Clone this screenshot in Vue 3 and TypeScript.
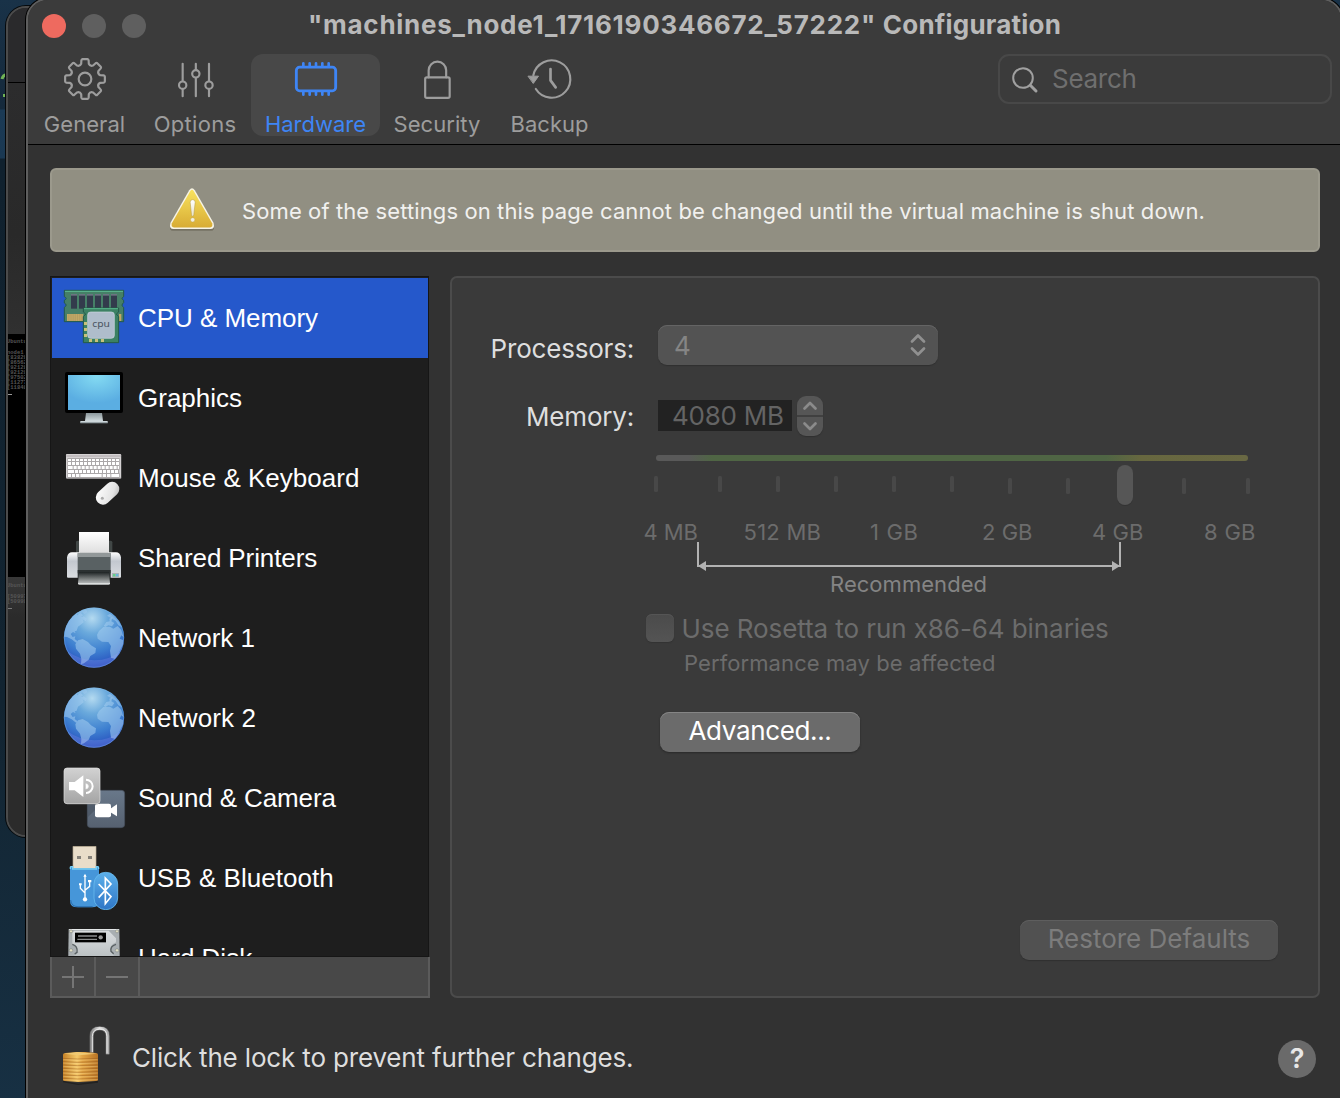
<script setup lang="ts">
import { ref } from 'vue'

interface Tab { id: string; label: string; width: number; view: string; spacing: number }
interface Device { id: string; label: string; view: string; spacing: number }

const tabs: Tab[] = [
  { id: 'general', label: 'General', width: 109, view: '183 165 144 144', spacing: 0.05 },
  { id: 'options', label: 'Options', width: 112, view: '513 165 144 144', spacing: 0.3 },
  { id: 'hardware', label: 'Hardware', width: 129, view: '876 165 144 144', spacing: 0 },
  { id: 'security', label: 'Security', width: 114, view: '99 165 144 144', spacing: 0.05 },
  { id: 'backup', label: 'Backup', width: 111, view: '438 165 144 144', spacing: 0 },
]

const devices: Device[] = [
  { id: 'cpu', label: 'CPU & Memory', view: '186 408 192 192', spacing: -0.05 },
  { id: 'graphics', label: 'Graphics', view: '36 18 192 192', spacing: 0 },
  { id: 'mouse', label: 'Mouse & Keyboard', view: '36 258 192 192', spacing: 0.02 },
  { id: 'printer', label: 'Shared Printers', view: '36 18 192 192', spacing: -0.1 },
  { id: 'net', label: 'Network 1', view: '36 258 192 192', spacing: 0 },
  { id: 'net', label: 'Network 2', view: '36 258 192 192', spacing: 0.1 },
  { id: 'sound', label: 'Sound & Camera', view: '36 48 192 192', spacing: -0.12 },
  { id: 'usb', label: 'USB & Bluetooth', view: '36 288 192 192', spacing: 0.05 },
  { id: 'disk', label: 'Hard Disk', view: '66 48 192 192', spacing: 0 },
]

const activeTab = ref('hardware')
const selected = ref(0)

const consoleTop = ['Ubuntu', '', 'node1', '[83829', '[86562', '[92128', '[92129', '[97502', '[11277', '[11848']
const consoleBottom = ['Ubuntu', '', '[50997', '[50998']

const ticks = [
  { x: 1, y: 22 }, { x: 65, y: 22 }, { x: 123, y: 22 }, { x: 181, y: 22 }, { x: 239, y: 22 },
  { x: 297, y: 22 }, { x: 355, y: 24 }, { x: 413, y: 24 }, { x: 529, y: 24 }, { x: 593, y: 24 },
]
const marks = [
  { x: 16, w: 54.5, text: '4 MB' }, { x: 116, w: 77.5, text: '512 MB' }, { x: 242.500, w: 48, text: '1 GB' },
  { x: 354.500, w: 50.5, text: '2 GB' }, { x: 464.500, w: 51.5, text: '4 GB' }, { x: 576.500, w: 51.5, text: '8 GB' },
]

function gearPath(cx: number, cy: number): string {
  const at = (deg: number, r: number) => {
    const a = (deg * Math.PI) / 180
    return `${(cx + r * Math.sin(a)).toFixed(1)} ${(cy - r * Math.cos(a)).toFixed(1)}`
  }
  let d = ''
  for (let i = 0; i < 8; i++) {
    const a = i * 45
    d += `${i ? 'L' : 'M'}${at(a - 14, 47)}L${at(a - 11, 57)}Q${at(a - 10, 60)} ${at(a - 7, 60)}`
    d += `L${at(a + 7, 60)}Q${at(a + 10, 60)} ${at(a + 11, 57)}L${at(a + 14, 47)}Q${at(a + 22.5, 40)} ${at(a + 31, 47)}`
  }
  return d + 'Z'
}
const gear = gearPath(255, 237)

const keys: { x: number; y: number; w: number }[] = []
for (let r = 0; r < 5; r++) {
  const y = [297, 306, 318, 330, 342][r]
  if (r === 4) {
    keys.push({ x: 54, y, w: 9 }, { x: 66, y, w: 9 }, { x: 78, y, w: 10 }, { x: 91, y, w: 64 },
      { x: 158, y, w: 10 }, { x: 171, y, w: 10 }, { x: 184, y, w: 23 })
  } else {
    const shift = [0, 0, 5, 9][r]
    keys.push({ x: 54, y, w: 9 + shift })
    for (let c = 1; c < 12; c++) keys.push({ x: 54 + c * 12 + shift, y, w: 9 })
    keys.push({ x: 198 + shift, y, w: 9 - shift + (shift > 8 ? 1 : 0) })
  }
}
</script>

<template>
  <div class="desktop">
    <svg class="shard" width="6" height="110" viewBox="0 0 6 110">
      <path d="M2 79Q3 75 6 75M3 95.500H6" fill="none" stroke="#70b356" stroke-width="3" />
    </svg>
    <div class="rear">
      <div class="rear-title"></div>
      <div class="rear-body"></div>
      <div class="console live">
        <div v-for="(l, i) in consoleTop" :key="i" :class="['cline', { gap: !l }]">{{ l }}</div>
        <i></i>
      </div>
      <div class="console old">
        <div v-for="(l, i) in consoleBottom" :key="i" :class="['cline', { gap: !l }]">{{ l }}</div>
        <i></i>
      </div>
    </div>

    <div class="window">
      <header class="toolbar">
        <div class="titlebar">
          <span class="light close"></span><span class="light"></span><span class="light"></span>
          <h1>"machines_node1_1716190346672_57222" <span>Configuration</span></h1>
        </div>
        <div class="tools">
          <nav class="tabs">
            <button v-for="t in tabs" :key="t.id" type="button" :class="['tab', { active: t.id === activeTab }]"
              :style="{ width: t.width + 'px' }" @click="activeTab = t.id">
              <svg width="48" height="48" :viewBox="t.view" fill="none" stroke="currentColor" stroke-width="6.500"
                stroke-linecap="round" stroke-linejoin="round">
                <template v-if="t.id === 'general'">
                  <path :d="gear" /><circle cx="255" cy="237" r="19" />
                </template>
                <template v-else-if="t.id === 'options'">
                  <path d="M548 191.500V243M548 268V288.500M587.500 191.500V209M587.500 234V288.500M627 191.500V243M627 268V288.500" />
                  <circle cx="548" cy="255.500" r="11" /><circle cx="587.500" cy="221.500" r="11" /><circle cx="627" cy="255.500" r="11" />
                </template>
                <template v-else-if="t.id === 'hardware'">
                  <rect x="889" y="201.500" width="118" height="71" rx="10" stroke-width="8.500" />
                  <path stroke-width="8" d="M910 190V198M929 190V198M948 190V198M967 190V198M986 190V198M910 276V284M929 276V284M948 276V284M967 276V284M986 276V284" />
                </template>
                <template v-else-if="t.id === 'security'">
                  <rect x="135.500" y="232" width="73.500" height="61.500" rx="5" />
                  <path d="M146 232V211A26 26 0 0 1 198.500 211V232" />
                </template>
                <template v-else>
                  <path d="M460 226A56 56 0 1 1 467.500 267" />
                  <path d="M445 228.500H475.500L460.500 249.500Z" fill="currentColor" stroke-width="3" />
                  <path d="M511.500 207V241L527 262" stroke-width="8" />
                </template>
              </svg>
              <span :style="{ letterSpacing: t.spacing + 'px' }">{{ t.label }}</span>
            </button>
          </nav>
          <div class="search">
            <svg width="28" height="28" viewBox="0 0 28 28" fill="none" stroke="#a0a0a0" stroke-linecap="round">
              <circle cx="12" cy="12" r="9.800" stroke-width="2" /><path d="M19.300 19.300L25 25" stroke-width="3" />
            </svg>
            <span>Search</span>
          </div>
        </div>
      </header>

      <section class="banner">
        <svg width="52" height="52" viewBox="498 102 156 156">
          <defs>
            <linearGradient id="warn" x1="0" y1="0" x2="0" y2="1"><stop offset="0" stop-color="#f8e25e" /><stop offset="1" stop-color="#d8ac34" /></linearGradient>
            <linearGradient id="bang" x1="0" y1="0" x2="0" y2="1"><stop offset="0" stop-color="#fff" /><stop offset="1" stop-color="#e9e3c8" /></linearGradient>
          </defs>
          <path d="M568 124Q576 114 584 124L641 221Q646 239 633 239H519Q506 239 511 221Z" fill="#55503d" opacity=".45" transform="translate(0 3)" />
          <path d="M567.500 121Q576 108 584.500 121L640.500 218Q646 237 631 237H521Q506 237 511.500 218Z" fill="#f7f4e6" />
          <path d="M571 123Q576 115 581 123L636.500 220Q639.500 232 630 232.500H522Q512.500 232 515.500 220Z" fill="url(#warn)" />
          <path d="M570.500 157Q570.500 149 578 149T585.500 157L581.500 194Q581 199 578 199T574.500 194Z" fill="url(#bang)" stroke="#b39a45" stroke-width="1.500" />
          <circle cx="578" cy="209.500" r="6.500" fill="#f2efdf" stroke="#b39a45" stroke-width="1" />
        </svg>
        <span>Some of the settings on this page cannot be changed until the virtual machine is shut down.</span>
      </section>

      <main class="columns">
        <aside class="sidebar">
          <ul class="devices">
            <li v-for="(d, i) in devices" :key="i" :class="{ selected: i === selected }" @click="selected = i">
              <svg width="64" height="64" :viewBox="d.view">
                <template v-if="d.id === 'cpu'">
                  <path d="M193 421H371V440Q361 445 371 451V458Q361 466 371 472V515H193V472Q204 465 193 459V451Q204 445 193 440Z" fill="#467f67" stroke="#24594a" stroke-width="3" />
                  <path d="M195 424H369" stroke="#5cba92" stroke-width="3" />
                  <path v-for="n in 6" :key="n" :d="`M${189 + n * 24} 434h18v42h-18z`" fill="#333b4c" />
                  <path v-for="n in 6" :key="'t' + n" :d="`M${189 + n * 24} 432h18v5h-18z`" fill="#6c7482" />
                  <path d="M201 492H250V513H201ZM357 492H364V513H357Z" fill="#c1a866" />
                  <path v-for="n in 7" :key="'g' + n" :d="`M${200 + n * 6.500} 492v21`" stroke="#9a8a58" />
                  <path d="M250 474H356V486L349 492L356 500V578H250V500L257 492L250 486Z" fill="#3c8163" stroke="#245a47" stroke-width="3" />
                  <path d="M252 476H354" stroke="#58b78c" stroke-width="3" />
                  <path d="M252 516h9v9h-9zM252 534h9v9h-9zM252 552h9v9h-9zM267 567h9v9h-9zM285 567h9v9h-9zM303 567h9v9h-9z" fill="#c8c17c" />
                  <rect x="263" y="486" width="80" height="79" rx="9" fill="#afbdcb" stroke="#d0dae2" stroke-width="2" />
                  <text x="303.500" y="532" text-anchor="middle" textLength="53" lengthAdjust="spacingAndGlyphs" font-size="27" fill="#4b5561" class="chip">cpu</text>
                </template>
                <template v-else-if="d.id === 'graphics'">
                  <defs>
                    <radialGradient id="scr" cx=".55" cy=".05" r=".75"><stop offset="0" stop-color="#83daf2" /><stop offset="1" stop-color="#5baee2" /></radialGradient>
                    <linearGradient id="stand" x1="0" y1="0" x2="0" y2="1"><stop offset="0" stop-color="#8b979b" /><stop offset="1" stop-color="#d3dde0" /></linearGradient>
                  </defs>
                  <rect x="45" y="36" width="174" height="123" rx="6" fill="#000" />
                  <rect x="54" y="45" width="156" height="105" fill="url(#scr)" />
                  <path d="M108 159H156L159 184H105Z" fill="url(#stand)" />
                  <path d="M91 183H173V189H91Z" fill="#ccd6d9" /><path d="M91 187H173V190H91Z" fill="#7f8a8e" />
                </template>
                <template v-else-if="d.id === 'mouse'">
                  <defs>
                    <linearGradient id="mse" x1="0" y1="0" x2="1" y2="1"><stop offset="0" stop-color="#fff" /><stop offset=".7" stop-color="#e3e3e3" /><stop offset="1" stop-color="#b5b5b5" /></linearGradient>
                  </defs>
                  <rect x="48" y="282" width="166" height="75" rx="4" fill="#8e8c8d" />
                  <rect x="48" y="282" width="165" height="72" rx="3" fill="#d5d2d3" />
                  <path d="M52 294H209V354H52Z" fill="#aaa7a8" /><path d="M49 288H212" stroke="#bbb6b8" stroke-width="5" />
                  <rect v-for="(k, n) in keys" :key="n" :x="k.x" :y="k.y" :width="k.w" :height="n < 13 ? 6 : 9" fill="#fff" />
                  <rect x="133" y="378" width="80" height="43" rx="21" transform="rotate(-43 173 400)" fill="url(#mse)" />
                  <circle cx="157" cy="415" r="4.500" fill="#aaa" />
                </template>
                <template v-else-if="d.id === 'printer'">
                  <defs>
                    <linearGradient id="paper" x1="0" y1="0" x2="0" y2="1"><stop offset="0" stop-color="#fff" /><stop offset="1" stop-color="#dedede" /></linearGradient>
                    <linearGradient id="side" x1="0" y1="0" x2="0" y2="1"><stop offset="0" stop-color="#fff" /><stop offset=".35" stop-color="#c3c8cf" /><stop offset="1" stop-color="#dadde1" /></linearGradient>
                    <linearGradient id="tray" x1="0" y1="0" x2="0" y2="1"><stop offset="0" stop-color="#1d2223" /><stop offset="1" stop-color="#c9cccc" /></linearGradient>
                  </defs>
                  <path d="M78 66Q78 62 84 62H182Q187 62 187 67V100H78Z" fill="#414746" />
                  <path d="M87 36H177V100H87Z" fill="url(#paper)" />
                  <path d="M51 112Q54 97 66 97H90V173H54Q51 173 51 170ZM213 112Q210 97 198 97H174V173H210Q213 173 213 170Z" fill="url(#side)" />
                  <path d="M83 100H182V160H83Z" fill="#596163" /><path d="M83 98H182V111H83Z" fill="#929899" />
                  <path d="M83 150H182V174H83Z" fill="#2b3031" />
                  <path d="M87 156H177L180 190Q180 194 176 194H88Q84 194 84 190Z" fill="url(#tray)" />
                  <path d="M84 191H180" stroke="#e2e4e4" stroke-width="3" />
                  <path d="M186 159H207V171H186Z" fill="#aab2b8" /><path d="M189 162h7v7h-7z" fill="#62d287" /><path d="M198 162h7v7h-7z" fill="#67b7dc" />
                </template>
                <template v-else-if="d.id === 'net'">
                  <defs>
                    <radialGradient id="sea" cx=".47" cy=".18" r=".85"><stop offset="0" stop-color="#b4daf0" /><stop offset=".3" stop-color="#6aa9dc" /><stop offset=".65" stop-color="#3d7fd0" /><stop offset="1" stop-color="#2347bb" /></radialGradient>
                    <clipPath id="ball"><circle cx="132" cy="353" r="90" /></clipPath>
                  </defs>
                  <circle cx="132" cy="353" r="90.500" fill="url(#sea)" />
                  <g clip-path="url(#ball)" fill="#a6cdf0" fill-opacity=".55">
                    <path d="M42 350L46 320L58 296L76 278L83 286L93 279L99 286L92 292L102 289L111 296L107 304L98 298L101 307L92 314L84 320L80 332L74 334L77 340L69 336L62 342L68 351L76 349L74 357L82 363L79 369L65 358L51 351Z" />
                    <path d="M78 280L92 270L108 267L112 276L104 283L96 277L87 286Z" fill-opacity=".4" />
                    <path d="M84 361L98 357L114 366L123 376L138 385L136 399L121 408L116 419L102 430L93 433L94 417L90 401L78 386L76 373Z" />
                    <path d="M161 318L169 306L179 304L178 296L188 290L184 304L193 309L186 319L175 316L166 321Z" />
                    <path d="M147 333L160 321L180 320L190 326L203 318L214 330L221 352L214 346L209 356L219 360V372L207 398L195 417L183 413L180 392L183 378L175 366L156 365L143 356L141 344Z" />
                    <path d="M171 287L180 281L190 288L206 305L216 322L205 316L197 303Z" fill-opacity=".5" />
                    <path d="M52 394Q88 420 132 421T212 394Q188 446 132 446T52 394Z" fill="#b0a6ff" fill-opacity=".2" />
                  </g>
                  <circle cx="132" cy="353" r="89" fill="none" stroke="#80b9ea" stroke-opacity=".35" stroke-width="3" />
                </template>
                <template v-else-if="d.id === 'sound'">
                  <defs>
                    <linearGradient id="cam" x1="0" y1="0" x2="0" y2="1"><stop offset="0" stop-color="#69788a" /><stop offset="1" stop-color="#566170" /></linearGradient>
                    <linearGradient id="spk" x1="0" y1="0" x2="0" y2="1"><stop offset="0" stop-color="#d2d2d2" /><stop offset="1" stop-color="#a4a4a4" /></linearGradient>
                  </defs>
                  <rect x="112" y="121" width="112" height="112" rx="10" fill="url(#cam)" stroke="#454f5c" stroke-width="2" />
                  <path d="M113 202L154 162H112Z" fill="#46505e" opacity=".6" />
                  <rect x="135" y="161" width="48" height="41" rx="6" fill="#fff" /><path d="M181 176L201 163V199L181 187Z" fill="#fff" />
                  <rect x="42" y="55" width="108" height="108" rx="9" fill="#555" />
                  <rect x="42" y="54" width="108" height="107" rx="9" fill="url(#spk)" stroke="#e2e2e2" stroke-width="2" />
                  <path d="M57 96H74L100 76V141L74 121H57Z" fill="#fff" />
                  <path d="M108 89A20 20 0 0 1 108 129" fill="none" stroke="#fff" stroke-width="6" />
                  <path d="M107 101A8 8 0 0 1 107 117" fill="#fff" stroke="#eee" stroke-width="2" />
                </template>
                <template v-else-if="d.id === 'usb'">
                  <defs>
                    <linearGradient id="bt" x1="0" y1="0" x2="0" y2="1"><stop offset="0" stop-color="#5cb0ea" /><stop offset="1" stop-color="#2f76c6" /></linearGradient>
                  </defs>
                  <path d="M69 289H138V358H69Z" fill="#e9ddc9" stroke="#b9aa91" stroke-width="2" />
                  <path d="M81 318h12v9h-12zM114 318h12v9h-12z" fill="#85817a" />
                  <path d="M60 352Q60 349 64 349H69V355H138V349H143Q147 349 147 352V455Q147 472 126 472H82Q60 472 60 452Z" fill="#4696d9" />
                  <path d="M61 357V352Q61 350 64 350H68V357H139V350H143Q146 350 146 357" fill="none" stroke="#75cef4" stroke-width="4" />
                  <path d="M62 450Q64 470 84 470H128" fill="none" stroke="#2b70b1" stroke-width="3" />
                  <g fill="none" stroke="#fff" stroke-width="4"><path d="M105 376V447M91 402V415L105 429M119 394V409L105 421" /></g>
                  <circle cx="105" cy="448" r="6.500" fill="#fff" /><path d="M100 380L105 371L110 380ZM114 390h10v7h-10zM87 400h8v6h-8z" fill="#fff" />
                  <rect x="132" y="367" width="71" height="112" rx="35" fill="url(#bt)" stroke="#66b9ed" stroke-width="2.500" />
                  <path d="M146 402L183 440L166 461V384L183 402L146 443" fill="none" stroke="#fff" stroke-width="5" />
                </template>
                <template v-else>
                  <defs><linearGradient id="hd" x1="0" y1="0" x2="0" y2="1"><stop offset="0" stop-color="#dadddf" /><stop offset="1" stop-color="#a3abad" /></linearGradient></defs>
                  <path d="M86 57H238L240 200H84Z" fill="#a9afb2" /><path d="M88 57H236V60H88Z" fill="#e5e8e9" />
                  <path d="M103 62H206L228 85V97Q208 106 211 121L222 138V200H101V138L115 128Q113 106 97 101V68Z" fill="url(#hd)" />
                  <path d="M97 103Q114 108 111 127L104 132M228 103Q210 108 213 124L221 131" stroke="#596063" stroke-width="4" fill="none" />
                  <path d="M105 68H198V97H105Z" fill="#020202" />
                  <path d="M114 78H171M112 88H171" stroke="#8a8c8d" stroke-width="4" /><circle cx="182" cy="82" r="6.500" fill="#999" />
                  <g fill="#e1dfc5" stroke="#777c7c" stroke-width="1.500"><circle cx="93" cy="64" r="4.500" /><circle cx="231" cy="64" r="4.500" /><circle cx="93" cy="121" r="5" /><circle cx="231" cy="121" r="5" /></g>
                </template>
              </svg>
              <span :style="{ letterSpacing: d.spacing + 'px' }">{{ d.label }}</span>
            </li>
          </ul>
          <div class="actions">
            <button type="button"><svg width="22" height="22" viewBox="0 0 22 22"><path d="M0 11H22M11 0V22" stroke="#757575" stroke-width="2" /></svg></button>
            <button type="button"><svg width="22" height="22" viewBox="0 0 22 22"><path d="M0 11H22" stroke="#757575" stroke-width="2" /></svg></button>
          </div>
        </aside>

        <section class="panel">
          <div class="row cpus">
            <label class="name">Processors:</label>
            <div class="select">
              <span>4</span>
              <svg width="16" height="24" viewBox="0 0 16 24" fill="none" stroke="#909090" stroke-width="2.700" stroke-linecap="round" stroke-linejoin="round"><path d="M2 8.500L8 2.500L14 8.500M2 15.500L8 21.500L14 15.500" /></svg>
            </div>
          </div>
          <div class="row mem">
            <label class="name">Memory:</label>
            <div class="amount">4080 MB</div>
            <div class="stepper">
              <svg width="26" height="40" viewBox="0 0 26 40" fill="none" stroke="#8b8b8b" stroke-width="2.700" stroke-linecap="round" stroke-linejoin="round"><path d="M0 20H26" stroke="#404040" stroke-width="2" stroke-linecap="butt" /><path d="M7.500 12.500L13 7L18.500 12.500M7.500 27.500L13 33L18.500 27.500" /></svg>
            </div>
          </div>
          <svg class="scale" width="640" height="145" viewBox="-12 0 640 145">
            <defs>
              <linearGradient id="track" gradientUnits="userSpaceOnUse" x1="0" y1="0" x2="592" y2="0">
                <stop offset="0" stop-color="#595959" /><stop offset=".055" stop-color="#595959" /><stop offset=".095" stop-color="#4f6544" />
                <stop offset=".76" stop-color="#4f6544" /><stop offset=".82" stop-color="#67673f" /><stop offset="1" stop-color="#696843" />
              </linearGradient>
            </defs>
            <rect x="0" y="1" width="592" height="6" rx="3" fill="url(#track)" />
            <rect v-for="t in ticks" :key="t.x" :x="t.x - 3" :y="t.y" width="4" height="16" rx="1.500" fill="#484848" />
            <rect x="461" y="12" width="16" height="40" rx="8" fill="#333" />
            <rect x="461" y="11" width="16" height="40" rx="8" fill="#565656" />
            <text v-for="m in marks" :key="m.text" :x="m.x - 28.500" y="86" :textLength="m.w">{{ m.text }}</text>
            <path d="M42 88V112H464V88" fill="none" stroke="#b2b2b2" stroke-width="2" />
            <path d="M42 112L50 107V117ZM464 112L456 107V117Z" fill="#b2b2b2" />
            <text class="rec" x="174" y="138" textLength="157">Recommended</text>
          </svg>
          <div class="rosetta"><span class="box"></span><span>Use Rosetta to run x86-64 binaries</span></div>
          <div class="note">Performance may be affected</div>
          <button type="button" class="push adv">Advanced...</button>
          <button type="button" class="push restore">Restore Defaults</button>
        </section>
      </main>

      <footer class="foot">
        <svg width="60" height="70" viewBox="48 330 180 210">
          <defs>
            <linearGradient id="brass" x1="0" y1="0" x2="1" y2="0"><stop offset="0" stop-color="#c68227" /><stop offset=".4" stop-color="#f4c869" /><stop offset=".55" stop-color="#e3a544" /><stop offset="1" stop-color="#b87425" /></linearGradient>
            <linearGradient id="steel" x1="0" y1="0" x2="1" y2="0"><stop offset="0" stop-color="#8c8c8c" /><stop offset=".5" stop-color="#dcdcdc" /><stop offset="1" stop-color="#aaa" /></linearGradient>
          </defs>
          <path d="M155 428V378Q155 355 179 355T203 378V433" fill="none" stroke="#5c5c5c" stroke-width="13" />
          <path d="M155 428V378Q155 355 179 355T203 378V433" fill="none" stroke="url(#steel)" stroke-width="9" />
          <path d="M157 426V380Q157 358 179 357T201 380V430" fill="none" stroke="#f4f4f4" stroke-width="2.500" />
          <path d="M69 512L115 521L174 512V518L115 525L69 517Z" fill="#181818" opacity=".6" />
          <path d="M69 434Q69 430 76 429L110 426H135L168 429Q174 430 174 434V509Q174 513 168 513L115 516L74 513Q69 513 69 509Z" fill="url(#brass)" />
          <path d="M72 431L113 427L171 431L115 436Z" fill="#f0c973" />
          <path v-for="n in 7" :key="n" :d="`M69 ${435 + n * 10}L113 ${437 + n * 10}L174 ${435 + n * 10}`" fill="none" stroke="#96581c" stroke-opacity=".45" stroke-width="3" />
          <path v-for="n in 7" :key="'h' + n" :d="`M70 ${439 + n * 10}L113 ${441 + n * 10}L173 ${439 + n * 10}`" fill="none" stroke="#ffe096" stroke-opacity=".35" stroke-width="3" />
        </svg>
        <span class="hint">Click the lock to prevent further changes.</span>
        <button type="button" class="help">?</button>
      </footer>
    </div>
  </div>
</template>

<style>
body { background: #15293a; overflow: hidden; }
</style>

<style scoped>
* { box-sizing: border-box; }
.desktop {
  position: relative; width: 1340px; height: 1098px; overflow: hidden;
  background: linear-gradient(#193248 0, #15293b 109px, #1b3a55 110px, #1a3852 158px, #10212e 159px, #122431 700px, #173043 1098px);
  font-family: Inter, "Noto Sans", sans-serif; color: #dedede;
}
button { border: 0; padding: 0; margin: 0; background: none; font: inherit; color: inherit; }
.shard { position: absolute; left: 0; top: 0; }

.rear {
  position: absolute; left: 6px; top: 6px; width: 200px; height: 831px; border-radius: 20px; overflow: hidden;
  border: 2px solid #4b4b4b; background: #2c2c2d; box-shadow: 0 0 0 1px #05090c;
  display: flex; flex-direction: column;
}
.rear-title { height: 75px; border-bottom: 1px solid #000; background: #2a2a2c; }
.rear-body { height: 251px; background: linear-gradient(#2c2c2d, #292929 60%, #303030); }
.console { font: bold 5.500px/5px "Liberation Mono", monospace; color: #555; padding-top: 5px; }
.console i { display: block; width: 4px; height: 1px; margin-top: 4px; background: #999; }
.cline { height: 5px; white-space: pre; margin-left: -1px; }
.cline.gap { height: 6px; }
.live { height: 243px; background: #000; }
.old { flex: 1; padding-top: 6px; background: linear-gradient(#383838, #2b2b2b 40px, #2b2b2b); color: #565656; }
.old i { background: #777; }

.window {
  position: absolute; left: 26px; top: -2px; width: 1317px; height: 1140px;
  border: 2px solid #5e5e5e; border-radius: 22px; background: #323232; overflow: hidden;
  box-shadow: 0 0 0 1px #000; display: flex; flex-direction: column;
}
.toolbar { height: 145px; background: #3b3b3b; border-bottom: 1px solid #000; }
.titlebar { height: 54px; display: flex; align-items: center; padding: 0 0 2px 14px; gap: 16px; }
.light { width: 24px; height: 24px; border-radius: 50%; background: #5f5f5f; }
.light.close { background: #ee6a5f; }
h1 { margin: -3px 0 0 146px; font-size: 26px; line-height: 32px; font-weight: 700; letter-spacing: 0.73px; color: #b9b9b9; white-space: nowrap; }
h1 span { letter-spacing: 0.2px; }
.tools { display: flex; justify-content: space-between; padding: 0 9px 0 2px; }
.tabs { display: flex; }
.tab { height: 82px; display: flex; flex-direction: column; align-items: center; color: #9d9d9d; border-radius: 12px; font-size: 22px; line-height: 28px; padding-top: 1px; }
.tab span { margin-top: 7px; }
.tab svg { flex: none; }
.tab.active { background: #484848; color: #3e85f5; }
.search { width: 334px; height: 50px; border: 2px solid #484848; border-radius: 11px; display: flex; align-items: center; padding-left: 11px; color: #6f6f6f; font-size: 26px; line-height: 32px; letter-spacing: -0.28px; }
.search svg { margin-top: 2px; margin-right: 13px; }
.search span { margin-top: -1px; }

.banner {
  width: 1270px; height: 84px; margin: 23px 0 0 22px; border: 2px solid #9b998c; border-radius: 6px; background: #918f82;
  display: flex; align-items: center; padding-left: 114px; font-size: 22px; letter-spacing: 0.103px; color: #f1f1ef; white-space: nowrap;
}
.banner span { margin: 2px 0 0 24px; }

.columns { display: flex; gap: 20px; margin: 24px 0 0 22px; height: 722px; }
.sidebar { width: 380px; display: flex; flex-direction: column; }
.devices { list-style: none; margin: 0; padding: 1px 0 0 1px; width: 379px; height: 681px; border: 1px solid #161616; background: #1e1e1e; overflow: hidden; font: 26px/32px "Liberation Sans", Arial, sans-serif; color: #fff; }
.devices li { height: 80px; display: flex; align-items: center; padding-left: 10px; white-space: nowrap; }
.devices li.selected { background: #2558cb; }
.devices span { margin-left: 12px; }
.chip { font-family: "Noto Sans", sans-serif; }
.actions { height: 41px; border: 2px solid #5b5b5b; border-top-width: 0; background: #484848; display: flex; }
.actions button { width: 44px; border-right: 2px solid #5b5b5b; display: flex; align-items: center; justify-content: center; }

.panel { width: 870px; height: 722px; border: 2px solid #4b4b4b; border-radius: 7px; background: #3a3a3a; display: flex; flex-direction: column; align-items: flex-start; font-size: 26px; line-height: 32px; }
.row { display: flex; }
.name { width: 182px; text-align: right; white-space: nowrap; letter-spacing: -0.2px; }
.cpus { margin-top: 47px; height: 40px; }
.cpus .name { padding-top: 8px; }
.select { margin-left: 24px; width: 280px; height: 40px; border-radius: 9px; background: #535353; box-shadow: inset 0 1px 0 #646464, 0 1px 1px #303030; display: flex; align-items: center; justify-content: space-between; padding: 0 12px 0 16px; color: #858585; }
.select span { margin-top: 1px; }
.mem { margin-top: 31px; height: 40px; }
.mem .name { padding-top: 5px; }
.amount { margin: 4px 5px 0 24px; width: 134px; height: 31px; line-height: 32px; background: #222; color: #646464; padding-left: 14px; letter-spacing: -0.25px; white-space: nowrap; }
.stepper { width: 26px; height: 40px; border-radius: 9px; background: #565656; box-shadow: 0 1px 1px #303030; }
.stepper svg { display: block; }
.scale { margin: 18px 0 0 192px; display: block; font-size: 22px; fill: #6c6c6c; }
.rec { fill: #848484; }
.rosetta { margin: 14px 0 0 194px; height: 32px; display: flex; align-items: center; gap: 7.500px; color: #6c6c6c; letter-spacing: -0.08px; white-space: nowrap; }
.box { width: 28px; height: 28px; margin-top: -2px; border-radius: 6px; background: linear-gradient(#4b4b4b, #545454); box-shadow: inset 0 1px 0 #555, 0 1px 1px #333; }
.note { margin: 2px 0 0 232px; font-size: 22px; letter-spacing: 0.09px; color: #6c6c6c; white-space: nowrap; }
.push { border-radius: 9px; height: 40px; padding-bottom: 2px; white-space: nowrap; }
.adv { margin: 33px 0 0 208px; width: 200px; background: #6b6b6b; color: #fff; letter-spacing: -0.35px; box-shadow: inset 0 1px 0 #858585, 0 1px 2px #292929; }
.restore { margin: 168px 0 0 568px; width: 258px; background: #515151; color: #7c7c7c; letter-spacing: 0; box-shadow: inset 0 1px 0 #5e5e5e, 0 1px 1px #303030; }

.foot { display: flex; align-items: center; margin: 22px 0 0 28px; height: 70px; font-size: 26px; line-height: 32px; }
.hint { margin: 5px 0 0 16px; letter-spacing: -0.16px; white-space: nowrap; }
.help { margin: 8px 25px 0 auto; width: 38px; height: 38px; border-radius: 50%; background: #6a6a6a; color: #e8e8e8; font-weight: 600; font-size: 27px; }
</style>
